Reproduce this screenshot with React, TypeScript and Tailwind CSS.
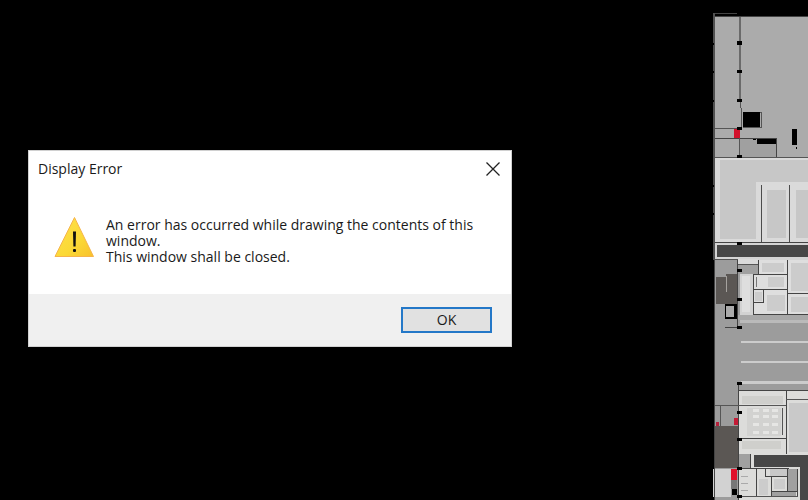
import { useState } from 'react';

type Box = [x: number, y: number, w: number, h: number, fill: string];

// Rooms, back to front
const ROOMS: Box[] = [
  [2, 17, 94, 141, '#ababab'],
  [28, 139, 36, 18, '#a0a0a0'],
  [3, 158, 93, 84, '#dadada'],
  [8, 160, 88, 22, '#c7c7c7'],
  [8, 160, 36, 79, '#c7c7c7'],
  [55, 190, 19, 48, '#c7c7c7'],
  [84, 190, 12, 48, '#c7c7c7'],
  [1, 243, 95, 17, '#d4d4d4'],
  [5, 245, 91, 12, '#474747'],
  [3, 260, 93, 240, '#9c9c9c'],
  [4, 277, 21, 27, '#5b5754'],
  [14, 274, 11, 30, '#5b5754'],
  [14, 276, 1, 16, '#a5a29e'],
  [26, 259, 20, 6, '#dadada'],
  [28, 265, 18, 9, '#a0a0a0'],
  [28, 274, 13, 41, '#d2d2d2'],
  [30, 276, 8, 36, '#dedede'],
  [47, 260, 49, 55, '#dedede'],
  [41, 274, 55, 41, '#dedede'],
  [50, 263, 22, 9, '#cccccc'],
  [56, 277, 16, 10, '#cccccc'],
  [44, 277, 1, 10, '#777777'],
  [43, 292, 7, 9, '#cccccc'],
  [55, 295, 18, 16, '#cccccc'],
  [79, 263, 17, 28, '#cccccc'],
  [79, 297, 17, 15, '#cccccc'],
  [26, 315, 70, 5, '#a8a8a8'],
  [28, 320, 68, 3, '#bababa'],
  [29, 341, 67, 2, '#cccccc'],
  [29, 361, 67, 2, '#cccccc'],
  [29, 381, 67, 3, '#cccccc'],
  [26, 390, 70, 110, '#dcdcda'],
  [30, 396, 41, 8, '#cfcfcc'],
  [77, 403, 19, 49, '#c9c9c9'],
  [35, 408, 34, 28, '#d2d2d0'],
  [30, 441, 39, 8, '#cfcfcc'],
  [26, 454, 12, 14, '#a0a0a0'],
  [3, 426, 23, 42, '#5b5754'],
  [42, 455, 54, 12, '#474747'],
  [88, 466, 8, 34, '#474747'],
  [1, 469, 18, 28, '#d2d2d2'],
  [19, 480, 6, 9, '#777777'],
  [47, 479, 9, 16, '#cccccc'],
  [62, 479, 11, 10, '#cccccc'],
  [58, 469, 17, 7, '#c8c8c8'],
  [76, 469, 9, 22, '#a0a0a0'],
  [60, 492, 24, 4, '#a0a0a0'],
];

const WALLS: Box[] = [
  [1, 13, 24, 1, '#444444'],
  [1, 16, 95, 1, '#444444'],
  [1, 13, 2, 247, '#505050'],
  [27, 17, 2, 83, '#6a6a6a'],
  [28, 100, 1, 8, '#555555'],
  [29, 108, 1, 20, '#555555'],
  [3, 128, 26, 1, '#555555'],
  [3, 138, 62, 1, '#444444'],
  [64, 138, 1, 19, '#444444'],
  [27, 138, 1, 20, '#555555'],
  [3, 157, 93, 1, '#555555'],
  [49, 185, 1, 57, '#4c4c4c'],
  [77, 185, 1, 57, '#4c4c4c'],
  [3, 242, 93, 1, '#444444'],
  [3, 259, 23, 1, '#555555'],
  [2, 260, 1, 240, '#444444'],
  [25, 260, 1, 68, '#444444'],
  [26, 264, 20, 1, '#555555'],
  [46, 260, 1, 14, '#444444'],
  [41, 274, 34, 1, '#444444'],
  [41, 274, 1, 41, '#444444'],
  [41, 289, 34, 1, '#444444'],
  [41, 302, 11, 1, '#444444'],
  [51, 290, 1, 13, '#444444'],
  [75, 260, 1, 55, '#444444'],
  [75, 293, 21, 1, '#444444'],
  [41, 314, 55, 1, '#444444'],
  [13, 327, 13, 1, '#444444'],
  [26, 383, 1, 117, '#444444'],
  [26, 390, 70, 1, '#444444'],
  [3, 405, 71, 1, '#555555'],
  [8, 406, 1, 20, '#555555'],
  [74, 390, 1, 64, '#444444'],
  [74, 399, 22, 1, '#555555'],
  [70, 408, 1, 27, '#555555'],
  [26, 438, 48, 1, '#444444'],
  [38, 454, 1, 14, '#444444'],
  [26, 468, 51, 1, '#444444'],
  [44, 469, 1, 27, '#444444'],
  [53, 469, 1, 7, '#444444'],
  [53, 476, 22, 1, '#444444'],
  [75, 469, 1, 22, '#444444'],
  [59, 476, 1, 21, '#444444'],
  [59, 491, 26, 1, '#444444'],
  [85, 469, 1, 28, '#444444'],
  [26, 496, 60, 1, '#555555'],
  [29, 476, 7, 1, '#aaaaaa'],
  [29, 483, 7, 1, '#aaaaaa'],
  [29, 490, 7, 1, '#aaaaaa'],
];

const FIXTURES: Box[] = [
  [31, 112, 17, 15, '#000000'],
  [45, 139, 19, 5, '#000000'],
  [41, 139, 3, 1, '#000000'],
  [80, 129, 5, 16, '#000000'],
  [84, 147, 1, 2, '#000000'],
  [13, 304, 12, 15, '#000000'],
  [14, 306, 8, 11, '#aaaaaa'],
  [20, 489, 5, 6, '#000000'],
  [22, 129, 6, 9, '#d3122c'],
  [4, 422, 3, 4, '#b5203a'],
  [22, 418, 4, 7, '#c41b36'],
  [19, 469, 6, 11, '#e0102a'],
];

// Door posts along the corridor wall
const POSTS = [41, 70, 99, 127, 155, 242, 269, 298, 326, 382, 411, 438, 467, 495];

const MESSAGE = 'An error has occurred while drawing the contents of this window.\nThis window shall be closed.';

function Rects({ boxes }: { boxes: Box[] }) {
  return (
    <>
      {boxes.map(([x, y, w, h, fill], i) => (
        <rect key={i} x={x} y={y} width={w} height={h} fill={fill} />
      ))}
    </>
  );
}

function FloorPlan() {
  return (
    <svg width="96" height="500" viewBox="0 0 96 500" className="shrink-0" shapeRendering="crispEdges" aria-hidden="true">
      <Rects boxes={ROOMS} />
      <Rects boxes={WALLS} />
      <rect x="31" y="112" width="18" height="15" fill="none" stroke="#555555" />
      <Rects boxes={FIXTURES} />
      {[41, 51, 60].map((x) =>
        [409, 415, 423, 431].map((y) => (
          <rect key={`${x}-${y}`} x={x} y={y} width="6" height="3" fill="#e6e6e4" />
        ))
      )}
      {POSTS.map((y) => (
        <rect key={y} x="25" y={y} width="5" height={y === 41 ? 4 : 3} fill="#000000" />
      ))}
      {[43, 71, 100, 185, 213].map((y) => (
        <rect key={y} x="0" y={y} width="2" height="2" fill="#000000" />
      ))}
    </svg>
  );
}

function WarningIcon() {
  return (
    <svg width="40" height="40" viewBox="0 0 40 40" className="shrink-0" aria-hidden="true">
      <defs>
        <linearGradient id="warn" x1="0" y1="0" x2="1" y2="1">
          <stop offset="0" stopColor="#ffe04d" />
          <stop offset="0.6" stopColor="#fbd936" />
          <stop offset="1" stopColor="#f8c12c" />
        </linearGradient>
      </defs>
      <path d="M20.5 0.5 L39.5 39.5 H1 Z" fill="url(#warn)" stroke="#f6b44a" strokeWidth="1" strokeLinejoin="round" />
      <path d="M19 14.5 H22 L21.6 29.5 H19.4 Z" fill="#111111" />
      <rect x="19" y="32" width="3" height="3" rx="1" fill="#111111" />
    </svg>
  );
}

export default function App() {
  const [open, setOpen] = useState(true);

  return (
    <div className="flex min-h-screen items-start justify-between overflow-hidden bg-black font-['Open_Sans','Noto_Sans',sans-serif] text-[#1a1a1a]">
      <div className="flex-1 pt-[150px] pl-7">
        {open && (
          <div role="alertdialog" aria-labelledby="title" aria-describedby="message" className="w-full max-w-[484px] border border-[#d0d0d0] bg-white">
            <header className="flex h-9 items-center justify-between pr-2 pl-[9px]">
              <h1 id="title" className="text-sm">Display Error</h1>
              <button type="button" aria-label="Close" onClick={() => setOpen(false)} className="flex h-6 w-5 items-center justify-center">
                <svg width="14" height="14" viewBox="0 0 14 14" stroke="#222222" strokeWidth="1.3" aria-hidden="true">
                  <path d="M0.5 0.5 L13.5 13.5 M13.5 0.5 L0.5 13.5" />
                </svg>
              </button>
            </header>
            <div className="flex gap-3 px-[25px] pt-[30px] pb-[29px]">
              <WarningIcon />
              <p id="message" className="text-sm leading-4 whitespace-pre-line">{MESSAGE}</p>
            </div>
            <footer className="flex justify-end bg-[#f0f0f0] px-[19px] py-[13px]">
              <button type="button" autoFocus onClick={() => setOpen(false)} className="flex h-[26px] w-[91px] items-center justify-center border-2 border-[#2478c8] bg-[#e1e1e1] text-sm outline-none">
                OK
              </button>
            </footer>
          </div>
        )}
      </div>
      <FloorPlan />
    </div>
  );
}
